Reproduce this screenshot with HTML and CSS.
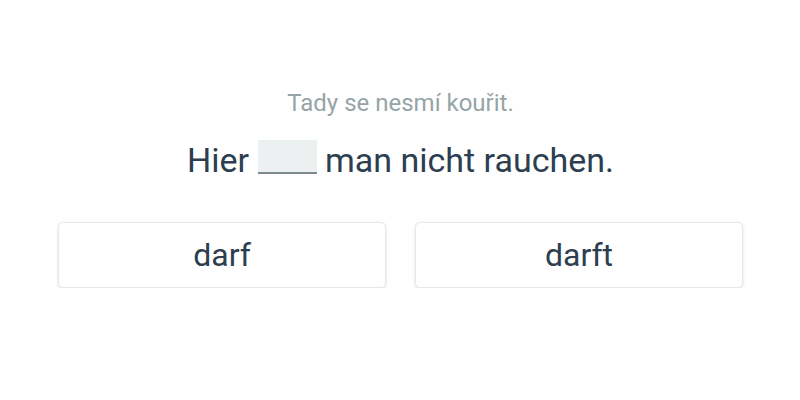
FILE: index.html
```html
<!DOCTYPE html>
<html lang="de">
<head>
<meta charset="utf-8">
<title>Quiz</title>
<link rel="stylesheet" href="styles.css">
</head>
<body>
<main class="quiz">
  <p class="hint">Tady se nesmí kouřit.</p>
  <p class="sentence">Hier <span class="blank"></span> man nicht rauchen.</p>
  <div class="options">
    <button class="option">darf</button>
    <button class="option">darft</button>
  </div>
</main>
</body>
</html>
```

FILE: styles.css
```css
html, body {
  margin: 0;
  padding: 0;
  background: #ffffff;
}
body {
  font-family: Roboto, "Liberation Sans", sans-serif;
  color: #2c3e50;
}
.quiz {
  display: flex;
  flex-direction: column;
  align-items: center;
  padding: 89px 57px 0 58px;
}
.hint {
  margin: 0;
  font-size: 24px;
  line-height: 28px;
  color: #95a5a6;
}
.sentence {
  margin: 21px 0 0;
  font-size: 34px;
  line-height: 44px;
  color: #2c3e50;
}
.blank {
  display: inline-block;
  width: 59px;
  height: 32px;
  background: #ecf0f1;
  border-bottom: 2px solid #7f8c8d;
  vertical-align: -2px;
}
.options {
  align-self: stretch;
  display: grid;
  grid-template-columns: 1fr 1fr;
  gap: 29px;
  margin-top: 40px;
}
.option {
  height: 66px;
  background: #ffffff;
  border: 1px solid #e6e8ea;
  border-radius: 5px;
  box-shadow: 0 1px 3px rgba(0,0,0,0.12);
  font-family: Roboto, "Liberation Sans", sans-serif;
  font-size: 32px;
  color: #2c3e50;
  padding: 0;
}
```
